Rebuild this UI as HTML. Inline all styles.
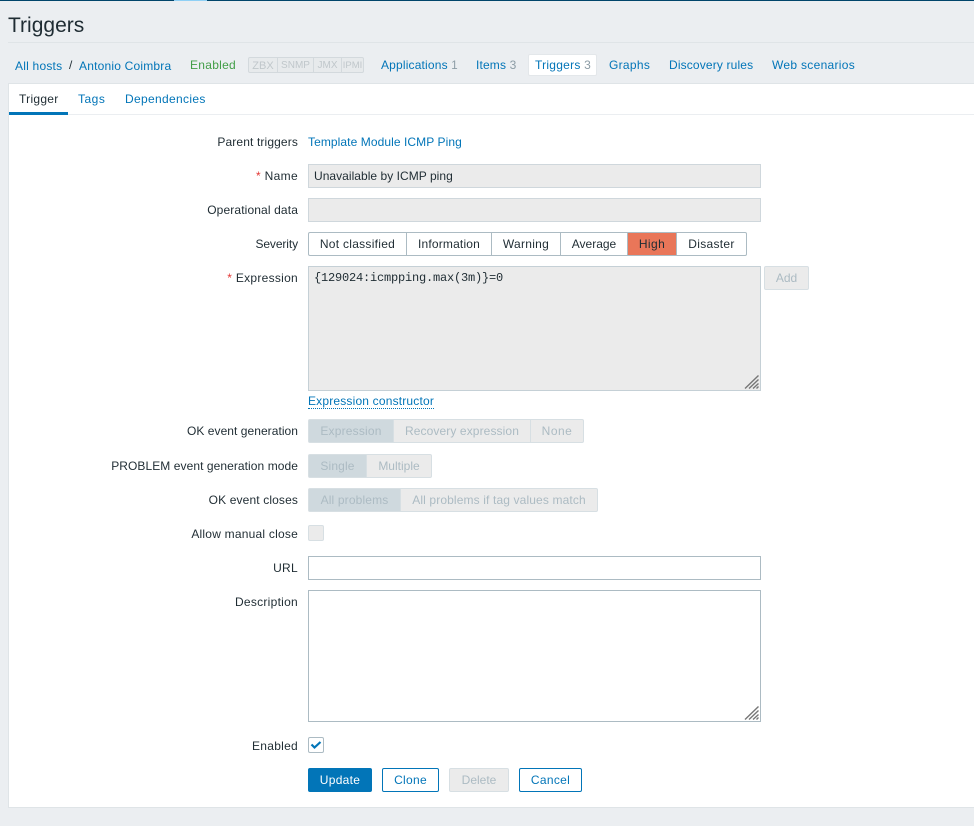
<!DOCTYPE html>
<html><head><meta charset="utf-8"><title>Triggers</title>
<style>
html,body{margin:0;padding:0}
body{width:974px;height:826px;position:relative;overflow:hidden;background:#ebeef1;font:12px/14px "Liberation Sans",Arial,sans-serif;color:#1f2c33}
.a,.l,.lnk,.box,.seg,.btn{position:absolute;box-sizing:border-box;white-space:nowrap}
.lnk{color:#0275b8;line-height:14px}
.l{right:676px;text-align:right;line-height:14px;width:300px}
.l i{font-style:normal;color:#e33734}
.n{color:#8c9ca5}
.box{left:308px;width:453px;border:1px solid #acbbc3;background:#fff}
.dis{background:#ebebeb;border-color:#cfd7dc}
.seg{display:flex;height:24px;top:0}
.seg span{display:block;box-sizing:border-box;height:100%;border:1px solid #acbbc3;border-left:0;text-align:center;background:#fff;line-height:22px;color:#1f2c33}
.seg span:first-child{border-left:1px solid #acbbc3;border-radius:2px 0 0 2px}
.seg span:last-child{border-radius:0 2px 2px 0}
.seg.d span{background:#ebebeb;color:#acbbc3;border-color:#d7dfe3}
.seg.d span.on{background:#cfd9de;}
.btn{height:24px;top:768px;border:1px solid #0275b8;border-radius:2px;text-align:center;line-height:22px;color:#0275b8;background:#fff}
</style></head>
<body>
<div class="a" style="left:0;top:0;width:974px;height:1px;background:#00456b"></div>
<div class="a" style="left:174px;top:0;width:33px;height:1px;background:#8fd0f5"></div>

<div class="a" style="left:8px;top:14px;font-size:21px;line-height:24px;color:#1f2c33">Triggers</div>
<div class="a" style="left:8px;top:42px;width:966px;height:1px;background:#dfe4e7"></div>

<div class="lnk" style="left:15px;top:59px;letter-spacing:.22px">All hosts</div>
<div class="a" style="left:69px;top:58px;color:#1f2c33">/</div>
<div class="lnk" style="left:79px;top:59px;letter-spacing:.2px">Antonio Coimbra</div>
<div class="a" style="left:190px;top:58px;color:#429e47;letter-spacing:.28px">Enabled</div>

<div class="a" style="left:248px;top:57px;height:16px;width:116px;border:1px solid #d3d9dd;border-radius:2px;background:#e7eaec;line-height:16px;color:#c0c7cb;display:flex;text-align:center">
<span style="width:28px;border-right:1px solid #d3d9dd;font-size:11px">ZBX</span><span style="width:35px;border-right:1px solid #d3d9dd;font-size:10px">SNMP</span><span style="width:27px;border-right:1px solid #d3d9dd;font-size:10px">JMX</span><span style="flex:1;font-size:9.5px">IPMI</span></div>

<div class="lnk" style="left:381px;top:58px;letter-spacing:.17px">Applications <span class="n" style="font-size:11.5px">1</span></div>
<div class="lnk" style="left:476px;top:58px;letter-spacing:.15px">Items <span class="n">3</span></div>
<div class="a" style="left:528px;top:54px;width:69px;height:22px;background:#fff;border:1px solid #e3e7ea;border-radius:2px"></div>
<div class="lnk" style="left:535px;top:58px;letter-spacing:.25px">Triggers <span class="n">3</span></div>
<div class="lnk" style="left:609px;top:58px;letter-spacing:.3px">Graphs</div>
<div class="lnk" style="left:669px;top:58px;letter-spacing:.15px">Discovery rules</div>
<div class="lnk" style="left:772px;top:58px;letter-spacing:.3px">Web scenarios</div>

<!-- panel -->
<div class="a" style="left:8px;top:83px;width:966px;height:725px;background:#fff;border:1px solid #dfe4e7;border-right:0"></div>
<div class="a" style="left:9px;top:114px;width:965px;height:1px;background:#ebeef1"></div>
<div class="a" style="left:9px;top:112px;width:59px;height:3px;background:#0275b8"></div>
<div class="a" style="left:19px;top:92px;color:#1f2c33;letter-spacing:.28px">Trigger</div>
<div class="lnk" style="left:78px;top:92px;letter-spacing:.5px">Tags</div>
<div class="lnk" style="left:125px;top:92px;letter-spacing:.33px">Dependencies</div>

<!-- form -->
<div class="l" style="top:135px;letter-spacing:.13px">Parent triggers</div>
<div class="lnk" style="left:308px;top:135px;letter-spacing:.08px">Template Module ICMP Ping</div>

<div class="l" style="top:169px;letter-spacing:.33px"><i>*</i> Name</div>
<div class="box dis" style="top:164px;height:24px;padding:0 5px;line-height:22px;color:#1f2c33;letter-spacing:.04px">Unavailable by ICMP ping</div>

<div class="l" style="top:203px;letter-spacing:.13px">Operational data</div>
<div class="box dis" style="top:198px;height:24px"></div>

<div class="l" style="top:237px;letter-spacing:-.1px">Severity</div>
<div class="seg" style="left:308px;top:232px">
<span style="width:99px;letter-spacing:.28px">Not classified</span><span style="width:85px;letter-spacing:.18px">Information</span><span style="width:69px;letter-spacing:.28px">Warning</span><span style="width:67px">Average</span><span style="width:49px;background:#e97659;border-color:#acbbc3;letter-spacing:.4px">High</span><span style="width:70px;letter-spacing:.3px">Disaster</span></div>

<div class="l" style="top:271px;letter-spacing:.28px"><i>*</i> Expression</div>
<div class="box dis" style="top:266px;height:125px;border-color:#c5d0d6;padding:4px 5px;font:12px/15px 'Liberation Mono',monospace;color:#1f2c33;letter-spacing:-.2px">{129024:icmpping.max(3m)}=0</div>
<svg class="a" style="left:744px;top:375px" width="15" height="14" viewBox="0 0 15 14"><path d="M1 13.500L14.500 .5M5 13.500L14.500 4.500M9 13.500L14.500 8.500M12.500 13.500L14.500 11.500" stroke="#777" stroke-width="1.400" fill="none"/></svg>
<div class="a" style="left:764px;top:266px;width:45px;height:24px;background:#ebebeb;border:1px solid #d7dfe3;border-radius:2px;text-align:center;line-height:22px;color:#acbbc3">Add</div>
<div class="lnk" style="left:308px;top:394px;border-bottom:1px dotted #0275b8;padding-bottom:0;height:15px;letter-spacing:.18px">Expression constructor</div>

<div class="l" style="top:424px;letter-spacing:.05px">OK event generation</div>
<div class="seg d" style="left:308px;top:419px">
<span class="on" style="width:86px;letter-spacing:.2px">Expression</span><span style="width:137px;letter-spacing:.1px">Recovery expression</span><span style="width:53px;letter-spacing:.5px">None</span></div>

<div class="l" style="top:459px;letter-spacing:.07px">PROBLEM event generation mode</div>
<div class="seg d" style="left:308px;top:454px">
<span class="on" style="width:59px;letter-spacing:.15px">Single</span><span style="width:65px">Multiple</span></div>

<div class="l" style="top:493px;letter-spacing:.13px">OK event closes</div>
<div class="seg d" style="left:308px;top:488px">
<span class="on" style="width:93px;letter-spacing:.15px">All problems</span><span style="width:197px;letter-spacing:.13px">All problems if tag values match</span></div>

<div class="l" style="top:527px;letter-spacing:.22px">Allow manual close</div>
<div class="a" style="left:308px;top:525px;width:16px;height:16px;background:#ebebeb;border:1px solid #d7dfe3;border-radius:2px"></div>

<div class="l" style="top:561px;letter-spacing:.3px">URL</div>
<div class="box" style="top:556px;height:24px"></div>

<div class="l" style="top:595px;letter-spacing:.27px">Description</div>
<div class="box" style="top:590px;height:132px"></div>
<svg class="a" style="left:744px;top:706px" width="15" height="14" viewBox="0 0 15 14"><path d="M1 13.500L14.500 .5M5 13.500L14.500 4.500M9 13.500L14.500 8.500M12.500 13.500L14.500 11.500" stroke="#777" stroke-width="1.400" fill="none"/></svg>

<div class="l" style="top:739px;letter-spacing:.28px">Enabled</div>
<div class="a" style="left:308px;top:737px;width:16px;height:16px;background:#fff;border:1px solid #acbbc3;border-radius:2px"></div>
<svg class="a" style="left:308px;top:737px" width="16" height="16" viewBox="0 0 16 16"><path d="M3.500 7.500L6.500 10.500L12.500 5" stroke="#0275b8" stroke-width="2.200" fill="none"/></svg>

<div class="btn" style="left:308px;width:64px;background:#0275b8;color:#fff;letter-spacing:.3px">Update</div>
<div class="btn" style="left:382px;width:57px;letter-spacing:.3px">Clone</div>
<div class="btn" style="left:449px;width:60px;background:#ebebeb;border-color:#d7dfe3;color:#acbbc3">Delete</div>
<div class="btn" style="left:519px;width:63px;letter-spacing:.3px">Cancel</div>
</body></html>
